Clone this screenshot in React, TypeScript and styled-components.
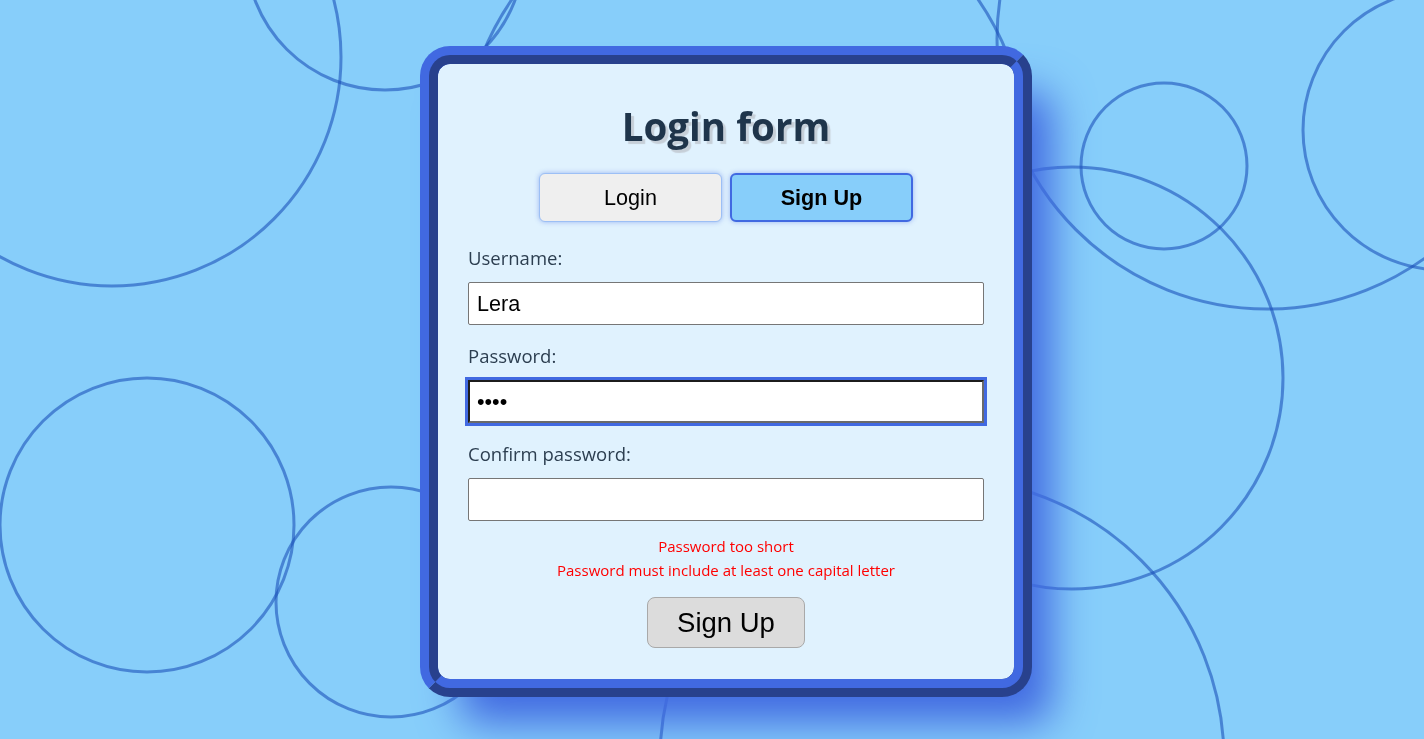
import React from "react";
import styled, { createGlobalStyle } from "styled-components";

const GlobalStyle = createGlobalStyle`
  html, body {
    margin: 0;
    padding: 0;
    width: 100%;
    height: 100%;
    background: #87cefa;
    overflow: hidden;
  }
  * { box-sizing: border-box; }
`;

const Page = styled.div`
  position: relative;
  width: 100vw;
  height: 100vh;
  display: flex;
  justify-content: center;
  align-items: flex-start;
  padding: 46px 0 0 28px;
`;

const Backdrop = styled.svg`
  position: fixed;
  inset: 0;
  width: 100%;
  height: 100%;
  z-index: 0;
`;

const Card = styled.div`
  position: relative;
  z-index: 1;
  width: 612px;
  border: 18px ridge #4169e1;
  border-radius: 30px;
  background: #e0f2fe;
  box-shadow: 30px 36px 42px -10px #4169e1;
  padding: 30px 30px 31px;
  display: flex;
  flex-direction: column;
  align-items: stretch;
`;

const Title = styled.h1`
  margin: 5px 0 0;
  text-align: center;
  font-family: "Open Sans", "Noto Sans", sans-serif;
  font-weight: 700;
  font-size: 38.5px;
  line-height: 54px;
  color: #1f354b;
  text-shadow: 3px 3px 1px #c6cfd8;
`;

const Tabs = styled.div`
  display: flex;
  justify-content: center;
  gap: 8px;
  margin-top: 20px;
`;

const Tab = styled.button<{ $active?: boolean }>`
  width: 183px;
  height: 49px;
  border-radius: 6px;
  font-family: Arial, "Liberation Sans", sans-serif;
  font-size: 21.6px;
  color: #000;
  cursor: pointer;
  font-weight: ${(p) => (p.$active ? 700 : 400)};
  background: ${(p) => (p.$active ? "#87cefa" : "#efefef")};
  border: ${(p) => (p.$active ? "2px solid #4169e1" : "1px solid #9cbff5")};
  box-shadow: 0 0 5px rgba(65, 105, 225, 0.45);
`;

const Field = styled.div<{ $first?: boolean }>`
  display: flex;
  flex-direction: column;
  gap: 12px;
  margin-top: ${(p) => (p.$first ? "24px" : "19px")};
`;

const Label = styled.label`
  font-family: "Open Sans", "Noto Sans", sans-serif;
  font-size: 18.5px;
  line-height: 24px;
  color: #2c3e50;
`;

const Input = styled.input<{ $focused?: boolean }>`
  width: 100%;
  height: 43px;
  padding: 8px;
  font-family: Arial, "Liberation Sans", sans-serif;
  font-size: 21.6px;
  color: #000;
  background: #fff;
  border-radius: 2px;
  border: 1px solid #767676;
  ${(p) =>
    p.$focused
      ? `
    border-width: 2px;
    border-color: #1c1c1c #6a6a6a #6a6a6a #1c1c1c;
    border-radius: 0;
    outline: 3px solid #4169e1;
    padding: 7px;
  `
      : ""}
`;

const Errors = styled.div`
  display: flex;
  flex-direction: column;
  align-items: center;
  gap: 4px;
  margin-top: 15px;
`;

const ErrorText = styled.p`
  margin: 0;
  font-family: "Open Sans", "Noto Sans", sans-serif;
  font-size: 15px;
  line-height: 20px;
  color: #ff0000;
`;

const SubmitRow = styled.div`
  display: flex;
  justify-content: center;
  margin-top: 17px;
`;

const Submit = styled.button`
  width: 158px;
  height: 51px;
  background: #dcdcdc;
  border: 1.5px solid #a9a9a9;
  border-radius: 8px;
  font-family: Arial, "Liberation Sans", sans-serif;
  font-size: 27.5px;
  color: #000;
  cursor: pointer;
`;

const circles: [number, number, number][] = [
  [112, 57, 229],
  [385, -49, 139],
  [745, 160, 283],
  [1164, 166, 83],
  [1443, 130, 140],
  [1072, 378, 211],
  [1267, 39, 270],
  [147, 525, 147],
  [391, 602, 115],
  [942, 760, 282],
];

export default function App() {
  return (
    <>
      <GlobalStyle />
      <Backdrop viewBox="0 0 1424 739" preserveAspectRatio="xMinYMin slice">
        {circles.map(([cx, cy, r], i) => (
          <circle
            key={i}
            cx={cx}
            cy={cy}
            r={r}
            fill="none"
            stroke="rgba(25, 80, 185, 0.58)"
            strokeWidth={3}
          />
        ))}
      </Backdrop>
      <Page>
        <Card>
          <Title>Login form</Title>
          <Tabs>
            <Tab>Login</Tab>
            <Tab $active>Sign Up</Tab>
          </Tabs>
          <Field $first>
            <Label>Username:</Label>
            <Input type="text" defaultValue="Lera" />
          </Field>
          <Field>
            <Label>Password:</Label>
            <Input type="password" defaultValue="1234" $focused />
          </Field>
          <Field>
            <Label>Confirm password:</Label>
            <Input type="password" defaultValue="" />
          </Field>
          <Errors>
            <ErrorText>Password too short</ErrorText>
            <ErrorText>Password must include at least one capital letter</ErrorText>
          </Errors>
          <SubmitRow>
            <Submit>Sign Up</Submit>
          </SubmitRow>
        </Card>
      </Page>
    </>
  );
}
